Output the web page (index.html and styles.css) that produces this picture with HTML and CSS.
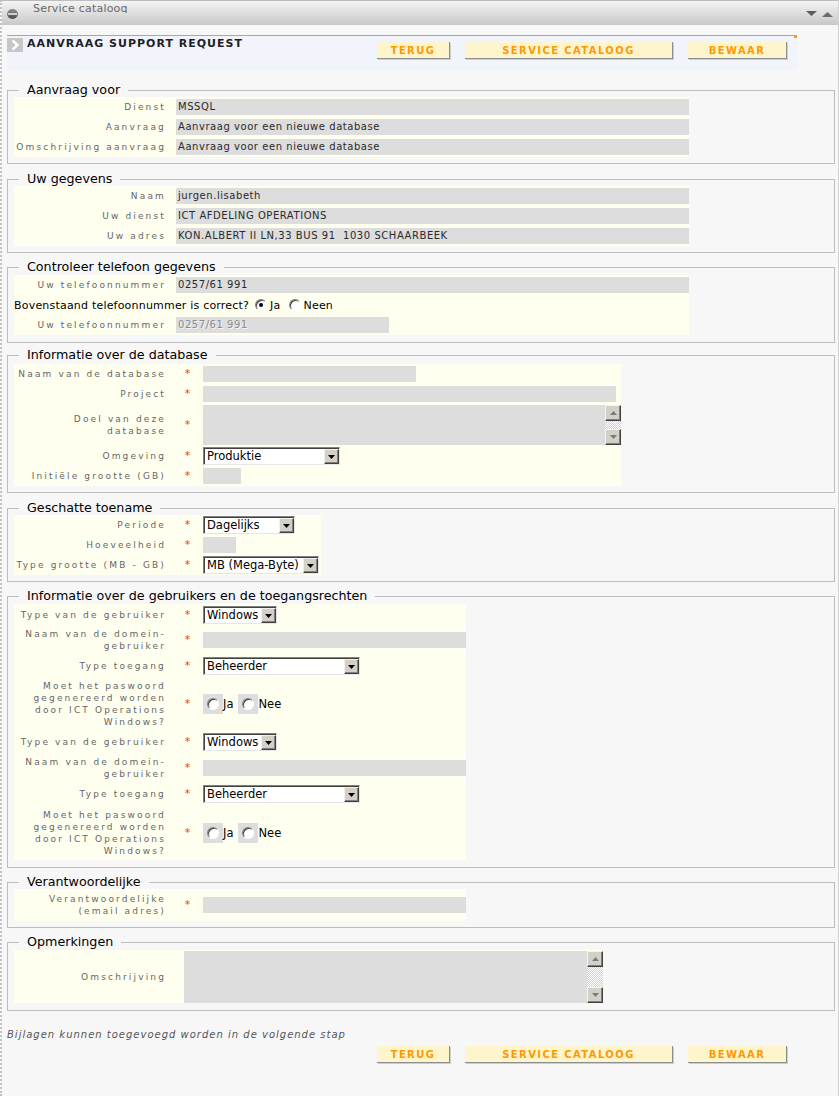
FILE: index.html
```html
<!DOCTYPE html>
<html lang="nl">
<head>
<meta charset="utf-8">
<title>Aanvraag support request</title>
<link rel="stylesheet" href="styles.css">
</head>
<body>
<div class="window">
  <div class="titlebar">
    <svg class="tb-icon" width="11" height="10" viewBox="0 0 11 10" aria-hidden="true">
      <defs><linearGradient id="gi" x1="0" y1="0" x2="0" y2="1"><stop offset="0" stop-color="#8e8e8e"/><stop offset="1" stop-color="#4a4a4a"/></linearGradient></defs>
      <ellipse cx="5.5" cy="5" rx="5.4" ry="4.9" fill="url(#gi)"/>
      <rect x="1" y="4" width="9" height="2" fill="#cfcfcf"/>
    </svg>
    <span class="tb-title">Service catalooq</span>
    <svg class="tb-arrows" width="27" height="7" viewBox="0 0 27 7" aria-hidden="true"><path d="M0 0H11L5.5 5Z" fill="#565d66"/><path d="M16 6H27L21.5 1Z" fill="#666d76"/></svg>
  </div>

  <div class="page">
    <div class="head">
      <span class="chev"><svg width="16" height="14" viewBox="0 0 16 14" aria-hidden="true"><path d="M5.5 2.5L10.5 7L5.5 11.5" fill="none" stroke="#fff" stroke-width="2.4"/></svg></span>
      <h1 class="head-title">AANVRAAG SUPPORT REQUEST</h1>
      <div class="btns">
        <span class="btn btn-terug">TERUG</span>
        <span class="btn btn-cat">SERVICE CATALOOG</span>
        <span class="btn btn-save">BEWAAR</span>
      </div>
    </div>

    <fieldset class="fs fs-1">
      <legend>Aanvraag voor</legend>
      <div class="tbl t-wide">
        <div class="lbl">Dienst</div><div class="val">MSSQL</div>
        <div class="lbl">Aanvraag</div><div class="val">Aanvraag voor een nieuwe database</div>
        <div class="lbl">Omschrijving aanvraag</div><div class="val">Aanvraag voor een nieuwe database</div>
      </div>
    </fieldset>

    <fieldset class="fs fs-2">
      <legend>Uw gegevens</legend>
      <div class="tbl t-wide">
        <div class="lbl">Naam</div><div class="val">jurgen.lisabeth</div>
        <div class="lbl">Uw dienst</div><div class="val">ICT AFDELING OPERATIONS</div>
        <div class="lbl">Uw adres</div><div class="val">KON.ALBERT II LN,33 BUS 91&nbsp; 1030 SCHAARBEEK</div>
      </div>
    </fieldset>

    <fieldset class="fs fs-3">
      <legend>Controleer telefoon gegevens</legend>
      <div class="tbl t-wide">
        <div class="lbl">Uw telefoonnummer</div><div class="val">0257/61 991</div>
        <div class="question">Bovenstaand telefoonnummer is correct?<span class="radio on"></span><span class="rtxt">Ja</span><span class="radio r2"></span><span class="rtxt">Neen</span></div>
        <div class="lbl">Uw telefoonnummer</div><div class="val val-off">0257/61 991</div>
      </div>
    </fieldset>

    <fieldset class="fs fs-4">
      <legend>Informatie over de database</legend>
      <div class="tbl t-db">
        <div class="lbl">Naam van de database</div><div class="star">*</div><div class="cell"><div class="inp w-name"></div></div>
        <div class="lbl">Project</div><div class="star">*</div><div class="cell"><div class="inp w-proj"></div></div>
        <div class="lbl">Doel van deze database</div><div class="star">*</div>
        <div class="cell">
          <div class="ta ta-db"><div class="ta-body"></div>
            <div class="sb"><span class="sb-btn"><svg width="7" height="4" viewBox="0 0 7 4" aria-hidden="true"><path d="M0 4H7L3.5 0Z" fill="#7a7a7a"/></svg></span><span class="sb-track"></span><span class="sb-btn"><svg width="7" height="4" viewBox="0 0 7 4" aria-hidden="true"><path d="M0 0H7L3.5 4Z" fill="#7a7a7a"/></svg></span></div>
          </div>
        </div>
        <div class="lbl">Omgeving</div><div class="star">*</div>
        <div class="cell"><div class="sel s-omg"><span class="sel-t">Produktie</span><span class="sel-b"><svg width="7" height="4" viewBox="0 0 7 4" aria-hidden="true"><path d="M0 0H7L3.5 4Z" fill="#000"/></svg></span></div></div>
        <div class="lbl">Initiële grootte (GB)</div><div class="star">*</div><div class="cell"><div class="inp w-init"></div></div>
      </div>
    </fieldset>

    <fieldset class="fs fs-5">
      <legend>Geschatte toename</legend>
      <div class="tbl t-grow">
        <div class="lbl">Periode</div><div class="star">*</div>
        <div class="cell"><div class="sel s-per"><span class="sel-t">Dagelijks</span><span class="sel-b"><svg width="7" height="4" viewBox="0 0 7 4" aria-hidden="true"><path d="M0 0H7L3.5 4Z" fill="#000"/></svg></span></div></div>
        <div class="lbl">Hoeveelheid</div><div class="star">*</div><div class="cell"><div class="inp w-qty"></div></div>
        <div class="lbl lbl-nw">Type grootte (MB - GB)</div><div class="star">*</div>
        <div class="cell"><div class="sel s-type"><span class="sel-t">MB (Mega-Byte)</span><span class="sel-b"><svg width="7" height="4" viewBox="0 0 7 4" aria-hidden="true"><path d="M0 0H7L3.5 4Z" fill="#000"/></svg></span></div></div>
      </div>
    </fieldset>

    <fieldset class="fs fs-6">
      <legend>Informatie over de gebruikers en de toegangsrechten</legend>
      <div class="tbl t-users">
        <div class="lbl">Type van de gebruiker</div><div class="star">*</div>
        <div class="cell"><div class="sel s-win"><span class="sel-t">Windows</span><span class="sel-b"><svg width="7" height="4" viewBox="0 0 7 4" aria-hidden="true"><path d="M0 0H7L3.5 4Z" fill="#000"/></svg></span></div></div>
        <div class="lbl">Naam van de domein-gebruiker</div><div class="star">*</div><div class="cell"><div class="inp w-dom"></div></div>
        <div class="lbl">Type toegang</div><div class="star">*</div>
        <div class="cell"><div class="sel s-beh"><span class="sel-t">Beheerder</span><span class="sel-b"><svg width="7" height="4" viewBox="0 0 7 4" aria-hidden="true"><path d="M0 0H7L3.5 4Z" fill="#000"/></svg></span></div></div>
        <div class="lbl">Moet het paswoord gegenereerd worden door ICT Operations Windows?</div><div class="star">*</div>
        <div class="cell radios"><span class="rbox"><span class="radio"></span></span><span class="rlab">Ja</span><span class="rbox rbox-2"><span class="radio"></span></span><span class="rlab">Nee</span></div>

        <div class="lbl">Type van de gebruiker</div><div class="star">*</div>
        <div class="cell"><div class="sel s-win"><span class="sel-t">Windows</span><span class="sel-b"><svg width="7" height="4" viewBox="0 0 7 4" aria-hidden="true"><path d="M0 0H7L3.5 4Z" fill="#000"/></svg></span></div></div>
        <div class="lbl">Naam van de domein-gebruiker</div><div class="star">*</div><div class="cell"><div class="inp w-dom"></div></div>
        <div class="lbl">Type toegang</div><div class="star">*</div>
        <div class="cell"><div class="sel s-beh"><span class="sel-t">Beheerder</span><span class="sel-b"><svg width="7" height="4" viewBox="0 0 7 4" aria-hidden="true"><path d="M0 0H7L3.5 4Z" fill="#000"/></svg></span></div></div>
        <div class="lbl">Moet het paswoord gegenereerd worden door ICT Operations Windows?</div><div class="star">*</div>
        <div class="cell radios"><span class="rbox"><span class="radio"></span></span><span class="rlab">Ja</span><span class="rbox rbox-2"><span class="radio"></span></span><span class="rlab">Nee</span></div>
      </div>
    </fieldset>

    <fieldset class="fs fs-7">
      <legend>Verantwoordelijke</legend>
      <div class="tbl t-resp">
        <div class="lbl">Verantwoordelijke (email adres)</div><div class="star">*</div><div class="cell"><div class="inp w-dom"></div></div>
      </div>
    </fieldset>

    <fieldset class="fs fs-8">
      <legend>Opmerkingen</legend>
      <div class="tbl t-opm">
        <div class="lbl">Omschrijving</div>
        <div class="cell">
          <div class="ta ta-opm"><div class="ta-body"></div>
            <div class="sb"><span class="sb-btn"><svg width="7" height="4" viewBox="0 0 7 4" aria-hidden="true"><path d="M0 4H7L3.5 0Z" fill="#7a7a7a"/></svg></span><span class="sb-track"></span><span class="sb-btn"><svg width="7" height="4" viewBox="0 0 7 4" aria-hidden="true"><path d="M0 0H7L3.5 4Z" fill="#7a7a7a"/></svg></span></div>
          </div>
        </div>
      </div>
    </fieldset>

    <p class="note">Bijlagen kunnen toegevoegd worden in de volgende stap</p>

    <div class="foot">
      <div class="btns">
        <span class="btn btn-terug">TERUG</span>
        <span class="btn btn-cat">SERVICE CATALOOG</span>
        <span class="btn btn-save">BEWAAR</span>
      </div>
    </div>
  </div>
</div>
</body>
</html>
```

FILE: styles.css
```css
* { box-sizing: border-box; }
html, body { margin: 0; padding: 0; }
body {
  width: 839px;
  height: 1096px;
  overflow: hidden;
  background: #f7f7f7;
  font-family: "DejaVu Sans", Verdana, sans-serif;
  color: #000;
}
.window {
  height: 1096px;
  border-left: 2px dotted #c2c2c2;
  border-right: 1px solid #d2d2d2;
}

/* title bar */
.titlebar {
  height: 25px;
  display: flex;
  align-items: flex-start;
  border-top: 1px solid #bdbdbd;
  background: linear-gradient(#f4f4f4, #c8c8c8);
}
.tb-icon { margin: 8px 0 0 5px; flex: none; }
.tb-title {
  margin: 1px 0 0 15px;
  height: 11px;
  overflow: hidden;
  font-size: 11px;
  letter-spacing: 0.2px;
  line-height: 13px;
  color: #6a6a6a;
}
.tb-arrows { margin: 10px 5px 0 auto; flex: none; }

/* page */
.page { padding: 0 3px 0 5px; }

.head {
  position: relative;
  width: 790px;
  height: 35px;
  margin-top: 10px;
  display: flex;
  align-items: flex-start;
  border-top: 1px solid #ff9900;
  background: #f1f4fa;
}
.head::after {
  content: "";
  position: absolute;
  right: 0;
  top: -1px;
  width: 3px;
  height: 3px;
  background: #ff9900;
}
.chev {
  display: flex;
  width: 16px;
  height: 14px;
  margin-top: 2px;
  background: #c6c6c6;
}
.head-title {
  margin: 1px 0 0 4px;
  font-size: 11px;
  font-weight: bold;
  letter-spacing: 1px;
  line-height: 14px;
  color: #1e1e28;
}
.btns {
  display: flex;
  gap: 15px;
  margin-left: auto;
  padding-right: 10px;
}
.head .btns { margin-top: 6px; }
.btn {
  display: block;
  height: 17px;
  background: #fff5cc;
  color: #ff9900;
  font-size: 10px;
  font-weight: bold;
  letter-spacing: 1.4px;
  line-height: 17px;
  text-align: center;
  border-right: 1px solid #8e8e8e;
  border-bottom: 1px solid #8e8e8e;
  box-shadow: 1px 1px 0 #cdcdcd;
}
.btn-terug { width: 73px; }
.btn-cat { width: 208px; }
.btn-save { width: 99px; }

/* fieldsets */
.fs {
  margin: 7px 0 0;
  padding: 0 6px 6px;
  border: 1px solid #bdbdbd;
  min-width: 0;
}
.fs legend {
  margin-left: 5px;
  padding: 0 8px;
  font-size: 12.7px;
  line-height: 14px;
  color: #000;
}
.fs-1 { margin-top: 13px; }
.fs-2 { margin-top: 8px; }
.fs-3 { padding-top: 1px; padding-bottom: 7px; }
.fs-4 { margin-top: 5px; padding-top: 2px; }
.fs-5 { margin-top: 8px; }
.fs-6 { padding-top: 1px; padding-bottom: 7px; }
.fs-7 { margin-top: 7px; }
.fs-8 { margin-top: 7px; padding-top: 1px; padding-bottom: 7px; }

.tbl {
  display: grid;
  align-items: center;
  background: #fffff0;
}
.lbl {
  font-size: 9px;
  letter-spacing: 2.15px;
  line-height: 12px;
  color: #666;
  text-align: right;
  padding-right: 6px;
}
.lbl-nw { white-space: nowrap; }
.star {
  font-size: 11px;
  line-height: 12px;
  color: #ff3300;
  text-align: center;
}
.cell { display: flex; align-items: center; }
.val {
  height: 16px;
  background: #dddddd;
  font-size: 10px;
  letter-spacing: 0.55px;
  line-height: 16px;
  padding-left: 2px;
  color: #2a2a2a;
  white-space: nowrap;
  overflow: hidden;
}
.val-off {
  width: 213px;
  color: #8a8a8a;
  text-shadow: 1px 1px 0 #f4f4f4;
}
.inp { height: 16px; background: #dddddd; }

/* table variants */
.t-wide {
  width: 675px;
  grid-template-columns: 162px 513px;
  grid-auto-rows: 20px;
}
.t-wide .lbl { padding-right: 10px; white-space: nowrap; }
.question {
  grid-column: 1 / -1;
  display: flex;
  align-items: center;
  font-size: 11px;
  letter-spacing: 0.2px;
  white-space: nowrap;
  color: #000;
}
.question .radio { margin-left: 6px; }
.question .r2 { margin-left: 8px; }
.rtxt { margin-left: 3px; }

.t-db {
  width: 607px;
  grid-template-columns: 158px 31px 418px;
  grid-template-rows: 20px 20px 42px 20px 20px;
}
.t-grow {
  width: 307px;
  grid-template-columns: 158px 31px 118px;
  grid-auto-rows: 20px;
}
.t-users {
  width: 452px;
  grid-template-columns: 158px 31px 263px;
  grid-template-rows: 22px 28px 24px 52px 24px 28px 24px 54px;
}
.t-resp {
  width: 452px;
  grid-template-columns: 158px 31px 263px;
  grid-template-rows: 32px;
}
.t-opm {
  width: 589px;
  grid-template-columns: 170px 419px;
  grid-template-rows: 53px;
  align-items: end;
}
.t-opm .lbl { padding-right: 18px; align-self: center; }

.w-name { width: 213px; }
.w-proj { width: 413px; }
.w-init { width: 38px; }
.w-qty { width: 33px; }
.w-dom { width: 263px; }

/* select lookalike */
.sel {
  display: flex;
  height: 18px;
  background: #fff;
  border: 1px solid;
  border-color: #808080 #e6e6e6 #e6e6e6 #808080;
  box-shadow: inset 1px 1px 0 #404040;
}
.sel-t {
  flex: 1;
  padding: 1px 0 0 3px;
  font-size: 11.5px;
  line-height: 15px;
  white-space: nowrap;
  overflow: hidden;
  color: #000;
}
.sel-b {
  flex: none;
  width: 15px;
  margin-top: 1px;
  display: flex;
  align-items: center;
  justify-content: center;
  background: #d4d0c8;
  border: 1px solid;
  border-color: #f0f0f0 #404040 #404040 #f0f0f0;
  box-shadow: inset -1px -1px 0 #808080;
}
.s-omg { width: 137px; }
.s-per { width: 92px; }
.s-type { width: 116px; }
.s-win { width: 74px; }
.s-beh { width: 157px; }

/* textarea lookalike */
.ta { display: flex; }
.ta-db { width: 419px; height: 40px; }
.ta-opm { width: 419px; height: 52px; }
.ta-body { flex: 1; background: #dddddd; }
.sb { width: 16px; display: flex; flex-direction: column; }
.sb-btn {
  flex: none;
  height: 16px;
  display: flex;
  align-items: center;
  justify-content: center;
  background: #d4d0c8;
  border: 1px solid;
  border-color: #f4f4f4 #404040 #404040 #f4f4f4;
  box-shadow: inset -1px -1px 0 #808080;
}
.sb-track {
  flex: 1;
  background-color: #fff;
  background-image: repeating-conic-gradient(#d4d0c8 0 25%, #ffffff 0 50%);
  background-size: 2px 2px;
}

/* radios */
.radio {
  position: relative;
  display: inline-block;
  flex: none;
  width: 12px;
  height: 12px;
  border-radius: 50%;
  background: #fff;
  border: 1px solid;
  border-color: #808080 #ffffff #ffffff #808080;
  box-shadow: inset 1px 1px 0 #404040;
}
.radio.on::after {
  content: "";
  position: absolute;
  left: 3px;
  top: 3px;
  width: 4px;
  height: 4px;
  border-radius: 50%;
  background: #000;
}
.radios { font-size: 11.5px; color: #000; }
.rbox {
  display: flex;
  width: 20px;
  height: 20px;
  align-items: center;
  justify-content: center;
  background: #dddddd;
}
.rbox-2 { margin-left: 5px; }

/* footer */
.note {
  margin: 18px 0 0;
  font-size: 10px;
  font-style: italic;
  letter-spacing: 1px;
  line-height: 12px;
  color: #555;
}
.foot {
  width: 790px;
  margin-top: 5px;
  display: flex;
}
```
